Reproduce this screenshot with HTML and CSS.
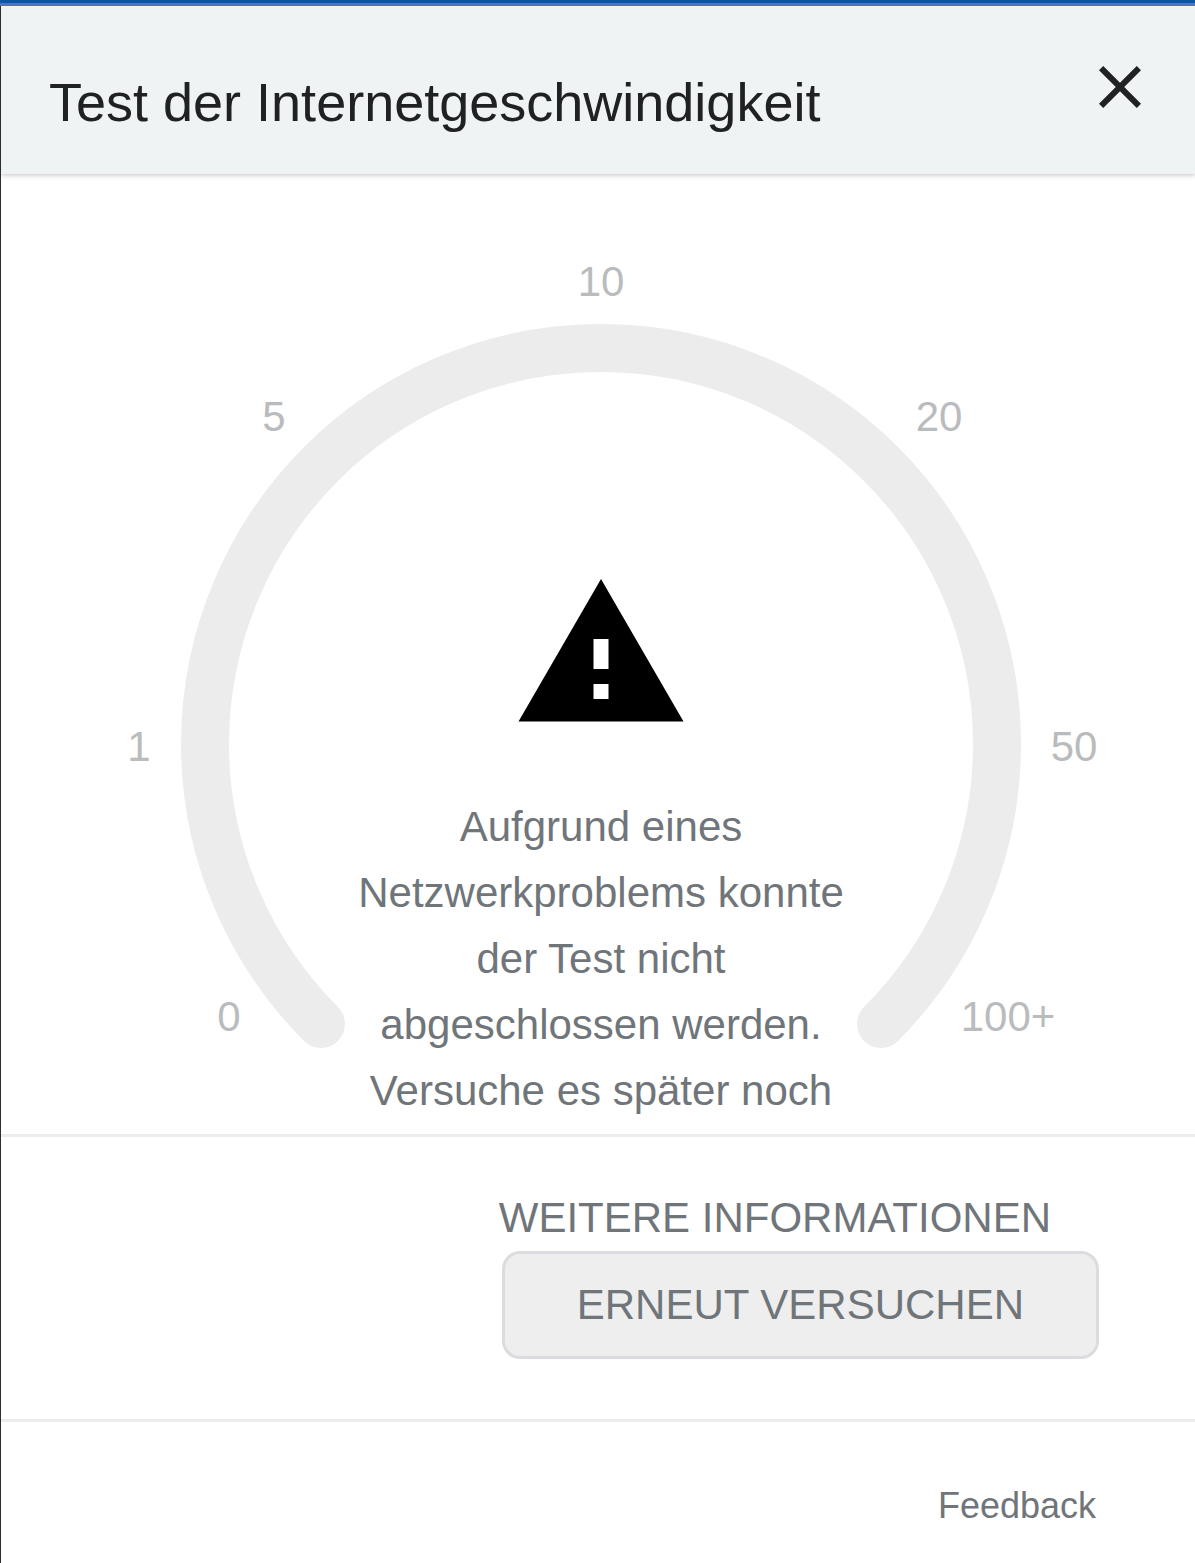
FILE: index.html
```
<!DOCTYPE html>
<html lang="de">
<head>
<meta charset="utf-8">
<meta name="viewport" content="width=device-width, initial-scale=1">
<title>Test der Internetgeschwindigkeit</title>
<link rel="stylesheet" href="styles.css">
</head>
<body>
<main class="dialog">
  <header class="header">
    <h1 class="title">Test der Internetgeschwindigkeit</h1>
    <button class="close" type="button" aria-label="Schließen">
      <svg class="close-icon" viewBox="0 0 24 24" aria-hidden="true"><path d="M19 6.41L17.59 5 12 10.59 6.41 5 5 6.41 10.59 12 5 17.59 6.41 19 12 13.41 17.59 19 19 17.59 13.41 12z"/></svg>
    </button>
  </header>
  <section class="result">
    <svg class="gauge" viewBox="0 0 1104 888">
      <path class="track" d="M272 850A396 396 0 1 1 832 850"/>
      <g class="labels">
        <text x="180" y="857">0</text>
        <text x="90" y="587">1</text>
        <text x="225" y="257">5</text>
        <text x="552" y="122">10</text>
        <text x="890" y="257">20</text>
        <text x="1025" y="587">50</text>
        <text x="959" y="857">100+</text>
      </g>
    </svg>
    <div class="message">
      <svg class="warning" viewBox="0 0 24 24" aria-hidden="true"><path d="M1 21h22L12 2 1 21zm12-3h-2v-2h2v2zm0-4h-2v-4h2v4z"/></svg>
      <p class="message-text">Aufgrund eines Netzwerkproblems konnte der Test nicht abgeschlossen werden. Versuche es später noch</p>
    </div>
  </section>
  <div class="actions">
    <a class="more" href="#">WEITERE INFORMATIONEN</a>
    <button class="retry" type="button">ERNEUT VERSUCHEN</button>
  </div>
  <footer class="footer">
    <a class="feedback" href="#">Feedback</a>
  </footer>
</main>
</body>
</html>
```
FILE: styles.css
```
* {
  box-sizing: border-box;
}

body {
  margin: 0;
  min-height: 100vh;
  display: flex;
  flex-direction: column;
  border-top: 3px solid #14529f;
  background: #fff;
  color: #70757a;
  font-family: "Liberation Sans", Arial, sans-serif;
  font-size: 42px;
  line-height: 66px;
}

.dialog {
  flex: 1;
  border-left: 1px solid #2d2d31;
}

/* The light blue strip spans the whole window, above the left edge line. */
body::before {
  content: "";
  height: 3px;
  background: #4878b6;
}

.header {
  position: relative;
  display: flex;
  align-items: flex-start;
  justify-content: space-between;
  padding: 45px 39px 39px 48px;
  background: #eff3f4;
  box-shadow: 0 1px 5px rgba(0, 0, 0, 0.25);
  clip-path: inset(0 0 -8px 0);
}

.title {
  margin: 0;
  padding-top: 18px;
  color: #202124;
  font-size: 54px;
  font-weight: 400;
}

.close {
  flex: none;
  padding: 0;
  border: 0;
  background: none;
  cursor: pointer;
}

.close-icon {
  display: block;
  width: 72px;
  height: 72px;
  fill: #202124;
}

.result {
  display: grid;
  justify-items: center;
  align-items: start;
  padding: 0 42px 0 48px;
}

.gauge,
.message {
  grid-area: 1 / 1;
}

.gauge {
  width: 100%;
  max-width: 1104px;
}

.track {
  fill: none;
  stroke: #ececec;
  stroke-width: 48px;
  stroke-linecap: round;
}

.labels {
  fill: #b9bbbd;
  text-anchor: middle;
}

.message {
  display: flex;
  flex-direction: column;
  align-items: center;
  gap: 50px;
  max-width: 500px;
  padding: 390px 0 10px;
}

.warning {
  width: 180px;
  height: 180px;
  fill: #000;
}

.message-text {
  margin: 0;
  text-align: center;
}

.actions {
  display: flex;
  flex-direction: column;
  align-items: flex-end;
  padding: 48px 96px 60px;
  border: solid #ececec;
  border-width: 3px 0;
}

.more,
.feedback {
  color: inherit;
  text-decoration: none;
}

.more {
  padding-right: 48px;
}

.retry {
  height: 108px;
  padding: 0 72px;
  border: 3px solid #dadce0;
  border-radius: 18px;
  background: #eee;
  color: inherit;
  font: inherit;
  cursor: pointer;
}

.footer {
  display: flex;
  justify-content: flex-end;
  padding: 51px 99px 24px;
  font-size: 36px;
}
```
